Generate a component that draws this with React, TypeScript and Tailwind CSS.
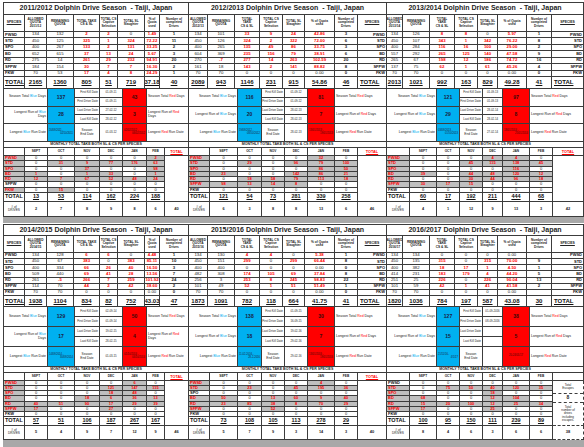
import React from 'react';

type Side = 'L' | 'B' | 'C';
type P = {
  title: string;
  side: Side;
  q: string;
  rows: string[][];
  total: string[];
  blue: string[];
  red: string[];
  dates: string[];
  monthly: number[][];
  mtotal: string[];
  drives: string[];
  dtotal: string;
  escapes?: boolean;
};

const SPECIES = ['PWSD', 'STD', 'SPO', 'BD', 'RD', 'SFPW', 'FKW'];

const TPL = {
  L: {
    w: 'w-[189px] pl-[3px]',
    top: 'grid grid-cols-[21px_22px_27px_26px_18px_27px_15px_29px]',
    mid: 'grid grid-cols-[44px_27px_25px_23px_24px_42px]',
    mon: 'grid grid-cols-[21px_23px_27px_25px_23px_24px_18px_24px]',
  },
  B: {
    w: 'w-[198px]',
    top: 'grid grid-cols-[19px_27px_25px_23px_22px_30px_23px_29px]',
    mid: 'grid grid-cols-[49px_24px_23px_23px_27px_52px]',
    mon: 'grid grid-cols-[21px_28px_24px_23px_23px_27px_23px_29px]',
  },
  C: {
    w: 'w-[197px]',
    top: 'grid grid-cols-[16px_27px_25px_23px_20px_29px_25px_32px]',
    mid: 'grid grid-cols-[50px_23px_23px_20px_27px_54px]',
    mon: 'grid grid-cols-[23px_27px_23px_23px_20px_27px_23px_31px]',
  },
};

const HT = {
  1: {
    pad: 'h-[2px]',
    title: 'h-[13px]',
    top: 'grid-rows-[17px_repeat(7,minmax(0,1fr))_12px] h-[74px]',
    mid: 'grid-rows-[repeat(6,minmax(0,1fr))] h-[53px]',
    mon: 'grid-rows-[8px_repeat(7,minmax(0,1fr))_9px_15px] h-[69px]',
    gray: 'h-[6px]',
  },
  2: {
    pad: 'h-[1px]',
    title: 'h-[12px]',
    top: 'grid-rows-[17px_repeat(7,minmax(0,1fr))_11px] h-[71px]',
    mid: 'grid-rows-[repeat(6,minmax(0,1fr))] h-[60px]',
    mon: 'grid-rows-[8px_repeat(7,minmax(0,1fr))_9px_14px] h-[67px]',
    gray: 'h-[7px]',
  },
};

const panels: P[] = [
  {
    title: '2011/2012 Dolphin Drive Season  - Taiji, Japan',
    side: 'L',
    q: '2011/12',
    rows: [
      ['134', '132', '2', '2', '0', '1.49', '1'],
      ['450', '125', '325', '1', '324', '72.22', '11'],
      ['400', '267', '133', '2', '131', '33.25', '2'],
      ['652', '615', '37', '13', '24', '5.67', '3'],
      ['275', '14', '261', '29', '232', '94.91', '20'],
      ['184', '154', '30', '7', '7', '16.30', '2'],
      ['70', '53', '17', '4', '8', '24.29', '1'],
    ],
    total: ['2165', '1360', '805', '51', '719', '37.18', '40'],
    blue: ['137', '28', '20/09/2011 -', '02/10/2011'],
    red: ['43', '3', '02/02/2012 -', '06/02/2012'],
    dates: ['01-09-11', '01-09-11', '27-02-12', '28-02-12', '01-03-12'],
    monthly: [
      [0, 0, 0, 0, 0, 2],
      [0, 31, 9, 77, 176, 63],
      [0, 0, 37, 0, 0, 98],
      [1, 0, 1, 33, 0, 1],
      [12, 7, 67, 52, 48, 24],
      [0, 0, 0, 0, 0, 0],
      [0, 15, 0, 0, 0, 0],
    ],
    mtotal: ['13', '53', '114', '162', '224', '188'],
    drives: ['2', '7', '8', '9', '8', '6'],
    dtotal: '40',
  },
  {
    title: '2012/2013 Dolphin Drive Season  - Taiji, Japan',
    side: 'B',
    q: '2012/13',
    rows: [
      ['134', '101', '33', '9', '24', '42.86', '3'],
      ['450', '126', '324', '2', '322', '72.00', '6'],
      ['400', '265', '135', '49', '86', '33.75', '3'],
      ['604', '369', '235', '156', '79', '38.91', '6'],
      ['270', '-7', '277', '14', '263', '102.59', '20'],
      ['161', '18', '143', '2', '141', '88.82', '8'],
      ['70', '70', '0', '0', '0', '0.00', '0'],
    ],
    total: ['2089', '943', '1146', '231', '915', '54.86', '46'],
    blue: ['116', '20', '19/09/2012 -', '08/10/2012'],
    red: ['81', '7', '13/01/2013 -', '19/01/2013'],
    dates: ['01-09-12', '01-09-12', '28-02-13', '28-02-13', '28-02-13'],
    monthly: [
      [0, 0, 0, 0, 32, 0],
      [0, 29, 0, 96, 79, 100],
      [0, 0, 0, 0, 86, 50],
      [23, 0, 0, 142, 86, 21],
      [0, 18, 58, 79, 113, 18],
      [98, 13, 14, 8, 0, 0],
      [0, 0, 0, 0, 0, 0],
    ],
    mtotal: ['121', '54', '73', '281', '339', '258'],
    drives: ['6', '3', '8', '8', '13', '6'],
    dtotal: '46',
  },
  {
    title: '2013/2014 Dolphin Drive Season  - Taiji, Japan',
    side: 'C',
    q: '2013/14',
    rows: [
      ['134', '126', '8', '8', '0', '5.97', '1'],
      ['450', '107', '343', '1', '342', '76.22', '8'],
      ['400', '284', '116', '16', '100', '29.00', '2'],
      ['557', '292', '265', '125', '140', '47.58', '9'],
      ['265', '67', '198', '12', '186', '74.72', '16'],
      ['137', '75', '62', '1', '61', '45.26', '4'],
      ['70', '70', '0', '0', '0', '0.00', '0'],
    ],
    total: ['2013', '1021', '992', '163', '829', '49.28', '41'],
    blue: ['121', '29', '03/09/2013 -', '01/10/2013'],
    red: ['97', '8', '18/01/2014 -', '25/01/2014'],
    dates: ['01-09-13', '01-09-13', '28-02-14', '28-02-14', '27-02-14'],
    monthly: [
      [0, 0, 0, 4, 4, 0],
      [0, 0, 45, 115, 138, 45],
      [0, 0, 0, 0, 116, 0],
      [39, 0, 44, 48, 120, 12],
      [0, 0, 30, 44, 96, 18],
      [30, 17, 15, 0, 0, 0],
      [0, 0, 0, 0, 0, 0],
    ],
    mtotal: ['60', '17', '192', '211', '444', '68'],
    drives: ['4', '1', '12', '9', '13', '3'],
    dtotal: '42',
  },
  {
    title: '2014/2015 Dolphin Drive Season  - Taiji, Japan',
    side: 'L',
    q: '2014/15',
    rows: [
      ['134', '128', '6', '6', '0', '4.48', '1'],
      ['450', '67', '383', '0', '383', '85.11', '10'],
      ['400', '334', '66', '26', '40', '16.50', '3'],
      ['509', '440', '69', '41', '28', '13.56', '7'],
      ['261', '-5', '266', '7', '259', '101.92', '24'],
      ['114', '70', '44', '2', '42', '38.60', '2'],
      ['70', '70', '0', '0', '0', '0.00', '0'],
    ],
    total: ['1938', '1104', '834', '82', '752', '43.03', '47'],
    blue: ['129', '17', '14/09/2014 -', '30/09/2014'],
    red: ['50', '4', '01/10/2014 -', '04/10/2014'],
    dates: ['02-09-14', '01-09-14', '19-02-15', '28-02-15', '01-03-15'],
    monthly: [
      [0, 0, 0, 0, 6, 0],
      [0, 0, 0, 121, 147, 115],
      [0, 0, 0, 18, 48, 0],
      [0, 0, 18, 6, 36, 13],
      [40, 51, 90, 17, 29, 39],
      [17, 0, 0, 27, 0, 0],
      [0, 0, 0, 0, 0, 0],
    ],
    mtotal: ['57', '51', '106', '187', '267', '167'],
    drives: ['5', '4', '9', '7', '12', '9'],
    dtotal: '46',
  },
  {
    title: '2015/2016 Dolphin Drive Season  - Taiji, Japan',
    side: 'B',
    q: '2015/16',
    rows: [
      ['134', '130', '4', '4', '0', '5.38', '1'],
      ['450', '151', '299', '0', '299', '66.44', '8'],
      ['400', '400', '0', '0', '0', '0.00', '0'],
      ['482', '308', '174', '105', '69', '37.84', '8'],
      ['256', '3', '253', '8', '245', '98.83', '22'],
      ['101', '49', '52', '1', '51', '51.49', '1'],
      ['70', '70', '0', '0', '0', '0.00', '0'],
    ],
    total: ['1873', '1091', '782', '118', '664', '41.75', '41'],
    blue: ['138', '18', '11-02-2016 -', '28-2-2016'],
    red: ['30', '7', '13/01/2016 -', '19/01/2016'],
    dates: ['01-09-15', '16-09-15', '19-02-16', '29-02-16', '29-02-16'],
    monthly: [
      [0, 0, 0, 0, 4, 0],
      [0, 23, 0, 45, 195, 36],
      [0, 0, 0, 0, 0, 0],
      [50, 0, 13, 60, 9, 40],
      [23, 85, 38, 8, 70, 29],
      [0, 0, 52, 0, 0, 0],
      [0, 0, 0, 0, 0, 0],
    ],
    mtotal: ['73', '108', '105', '113', '278', '29'],
    drives: ['5', '7', '9', '3', '14', '3'],
    dtotal: '40',
  },
  {
    title: '2016/2017 Dolphin Drive Season  - Taiji, Japan',
    side: 'C',
    q: '2016/17',
    rows: [
      ['134', '134', '0', '0', '0', '0.00', ''],
      ['450', '135', '315', '0', '315', '70.00', '9'],
      ['400', '382', '18', '17', '1', '4.50', '1'],
      ['414', '231', '183', '179', '4', '44.20', '5'],
      ['251', '25', '226', '0', '226', '90.04', '13'],
      ['101', '59', '42', '1', '41', '41.58', '2'],
      ['70', '70', '0', '0', '0', '0.00', ''],
    ],
    total: ['1820', '1036', '784', '197', '587', '43.08', '30'],
    blue: ['127', '15', '21/11/16-', '4/1/17'],
    red: ['38', '5', '20-24/01/17', ''],
    dates: ['01-09-2016', '08-09-2016', '', '', ''],
    monthly: [
      [0, 0, 0, 0, 0, 0],
      [0, 75, 50, 40, 120, 35],
      [0, 0, 0, 18, 0, 0],
      [68, 0, 0, 12, 104, 0],
      [15, 20, 100, 12, 25, 34],
      [17, 0, 0, 25, 0, 0],
      [0, 0, 0, 0, 0, 0],
    ],
    mtotal: ['100', '95', '150', '111', '239', '89'],
    drives: ['8', '4', '6', '3', '6', '6'],
    dtotal: '38',
    escapes: true,
  },
];

const BASE = 'flex items-center overflow-hidden border-r border-b border-[#3c3c3c] leading-[1.05] ';

function Cell({ children, cls = '' }: { children?: React.ReactNode; cls?: string }) {
  return <div className={BASE + 'justify-center text-center ' + cls}>{children}</div>;
}

const isZero = (v: string) => v === '0' || v === '0.00' || v === '';

function Blue() {
  return <span className="text-[#00b0f0]">Blue</span>;
}
function Red() {
  return <span className="text-[#ff0000]">Red</span>;
}

function TopTable({ p, r }: { p: P; r: 1 | 2 }) {
  const t = TPL[p.side];
  const h = HT[r];
  const L = p.side === 'L';
  const hd = 'text-[3.2px] font-bold text-[#222]';
  const heads = [
    <Cell key="h1" cls={hd}>
      ALLOWED
      <br />
      QUOTA
      <br />
      {p.q}
    </Cell>,
    <Cell key="h2" cls={hd}>
      REMAINING
      <br />
      QUOTA
    </Cell>,
    <Cell key="h3" cls={hd}>
      {L ? (
        <>
          TOTAL TAKE
          <br />
          CS &amp; SL
        </>
      ) : (
        <>
          TOTAL
          <br />
          TAKE
          <br />
          CS &amp; SL
        </>
      )}
    </Cell>,
    <Cell key="h4" cls={hd}>
      TOTAL CS
      <br />
      Captive
      <br />
      Selection
    </Cell>,
    <Cell key="h5" cls={hd}>
      TOTAL SL
      <br />
      Slaughter
    </Cell>,
    <Cell key="h6" cls={hd}>
      {L ? (
        <>
          % of
          <br />
          Quota
          <br />
          used
        </>
      ) : (
        <>
          % of Quota
          <br />
          used
        </>
      )}
    </Cell>,
    <Cell key="h7" cls={hd}>
      Number of
      <br />
      completed
      <br />
      Drives
    </Cell>,
  ];
  const sp = (
    <Cell key="sp" cls="text-[3.4px] font-bold underline text-[#222]">
      SPECIES
    </Cell>
  );
  const items: React.ReactNode[] = [];
  if (L) items.push(sp, ...heads);
  else items.push(...heads, sp);

  p.rows.forEach((row, i) => {
    const spc = (
      <div
        key={'s' + i}
        className={BASE + (L ? 'justify-start pl-[1px] ' : 'justify-end pr-[1px] ') + 'text-[4px] font-bold text-[#111]'}
      >
        {SPECIES[i]}
      </div>
    );
    const vals = row.map((v, j) => {
      let c = 'text-[4.3px] text-[#222]';
      if (j >= 2 && j <= 5 && !isZero(v)) c = 'text-[4.3px] font-bold text-[#ff0000]';
      if (j === 1 && v.startsWith('-')) c = 'text-[4.3px] font-bold text-[#ff0000]';
      if (j === 6) c = 'text-[4.3px] font-bold text-[#222]';
      return (
        <Cell key={'v' + i + '-' + j} cls={c}>
          {v}
        </Cell>
      );
    });
    if (L) items.push(spc, ...vals);
    else items.push(...vals, spc);
  });

  const tl = (
    <div
      key="tl"
      className={BASE + (L ? 'justify-start pl-[1px] ' : 'justify-start pl-[2px] ') + 'text-[6px] font-bold underline text-[#111]'}
    >
      TOTAL
    </div>
  );
  const tv = p.total.map((v, j) => (
    <Cell key={'t' + j} cls="text-[6px] font-bold underline text-[#111]">
      {v}
    </Cell>
  ));
  if (L) items.push(tl, ...tv);
  else items.push(...tv, tl);

  return <div className={`${t.top} ${h.top} ${L ? 'border-l border-[#3c3c3c]' : ''}`}>{items}</div>;
}

function MidTable({ p, r }: { p: P; r: 1 | 2 }) {
  const t = TPL[p.side];
  const h = HT[r];
  const L = p.side === 'L';
  const lt = 'row-span-2 justify-end text-right pr-[1px] pl-[2px] text-[3.5px] text-[#222] ';
  const rt = 'row-span-2 justify-start text-left pl-[1px] pr-[2px] text-[3.5px] text-[#222] ';
  const blue = 'row-span-2 justify-center bg-[#00b0f0] text-[5px] font-bold text-[#1b2040] ';
  const red = 'row-span-2 justify-center bg-[#ff0000] text-[5px] font-bold text-[#3a0a0a] ';
  const lab = 'justify-end text-right pr-[1px] text-[3px] text-[#222] ';
  const dt = 'justify-center text-[2.8px] text-[#222] ';
  const d = p.dates;
  return (
    <div className={`${t.mid} ${h.mid} ${L ? 'border-l border-[#3c3c3c]' : ''}`}>
      <div className={BASE + lt}>
        <span>
          Season Total <Blue /> Days
        </span>
      </div>
      <div className={BASE + blue}>{p.blue[0]}</div>
      <div className={BASE + lab}>First Kill Date</div>
      <div className={BASE + dt}>{d[0]}</div>
      <div className={BASE + red}>{p.red[0]}</div>
      <div className={BASE + rt}>
        <span>
          Season Total <Red /> Days
        </span>
      </div>
      <div className={BASE + lab}>First Drive Date</div>
      <div className={BASE + dt}>{d[1]}</div>

      <div className={BASE + lt}>
        <span>
          Longest Run of <Blue /> Days
        </span>
      </div>
      <div className={BASE + blue}>{p.blue[1]}</div>
      <div className={BASE + lab}>Last Drive Date</div>
      <div className={BASE + dt}>{d[2]}</div>
      <div className={BASE + red}>{p.red[1]}</div>
      <div className={BASE + rt}>
        <span>
          Longest Run of <Red /> Days
        </span>
      </div>
      <div className={BASE + lab}>Last Kill Date</div>
      <div className={BASE + dt}>{d[3]}</div>

      <div className={BASE + lt}>
        <span>
          Longest <Blue /> Run Date
        </span>
      </div>
      <div className={BASE + 'row-span-2 flex-col justify-center bg-[#00b0f0] text-[2.6px] text-[#1b2040]'}>
        <span className="self-start pl-[1px]">{p.blue[2]}</span>
        <span className="self-end pr-[1px]">{p.blue[3]}</span>
      </div>
      <div className={BASE + 'row-span-2 justify-center text-center text-[3.2px] text-[#222]'}>
        <span>
          Season
          <br />
          End Date
        </span>
      </div>
      <div className={BASE + 'row-span-2 ' + dt}>{d[4]}</div>
      <div className={BASE + 'row-span-2 flex-col justify-center bg-[#ff0000] text-[2.6px] text-[#3a0a0a]'}>
        <span className={p.red[3] ? 'self-start pl-[1px]' : 'self-center'}>{p.red[2]}</span>
        {p.red[3] ? <span className="self-end pr-[1px]">{p.red[3]}</span> : null}
      </div>
      <div className={BASE + rt}>
        <span>
          Longest <Red /> Run Date
        </span>
      </div>
    </div>
  );
}

function MonTable({ p, r }: { p: P; r: 1 | 2 }) {
  const t = TPL[p.side];
  const h = HT[r];
  const L = p.side === 'L';
  const items: React.ReactNode[] = [];
  items.push(<Cell key="b0" />);
  ['SEPT', 'OCT', 'NOV', 'DEC', 'JAN', 'FEB'].forEach((m) =>
    items.push(
      <Cell key={m} cls="text-[3.2px] font-bold text-[#222]">
        {m}
      </Cell>,
    ),
  );
  items.push(
    <Cell key="mt" cls="text-[3.8px] font-bold underline text-[#ff0000]">
      {p.escapes ? '' : 'TOTAL'}
    </Cell>,
  );
  p.monthly.forEach((row, i) => {
    const any = row.some((v) => v !== 0);
    items.push(
      <div
        key={'ms' + i}
        className={
          BASE +
          'justify-start pl-[1px] text-[4px] font-bold ' +
          (any ? 'bg-[#bfbfbf] text-[#ff0000]' : 'bg-white text-[#111]')
        }
      >
        {SPECIES[i]}
      </div>,
    );
    row.forEach((v, j) =>
      items.push(
        <Cell
          key={'mv' + i + '-' + j}
          cls={'text-[4px] ' + (v !== 0 ? 'bg-[#bfbfbf] font-bold text-[#ff0000]' : 'bg-white text-[#222]')}
        >
          {v}
        </Cell>,
      ),
    );
    if (i === 0) {
      if (p.escapes) {
        items.push(
          <div
            key="esc"
            className="row-span-8 flex flex-col border-r border-dashed border-b border-r-[#3c3c3c] border-b-[#3c3c3c] text-[#222]"
          >
            <div className="flex flex-[1.1] items-center justify-center text-center text-[3px] leading-[1.1]">
              Total
              <br />
              Escapes
            </div>
            <div className="flex h-[10px] items-center justify-center border-y border-dashed border-[#3c3c3c] text-[5px] font-bold">
              8
            </div>
            <div className="flex flex-[2] items-center justify-center text-center text-[3px] leading-[1.1]">
              Total
              <br />
              number of
              <br />
              drives
              <br />
              including
              <br />
              escapes.
            </div>
          </div>,
        );
      } else {
        items.push(
          <div key="tc" className="row-span-8 border-r border-b border-[#3c3c3c] bg-white" />,
        );
      }
    }
  });
  items.push(
    <div key="tt" className={BASE + 'justify-start pl-[1px] text-[5.5px] font-bold text-[#111]'}>
      TOTAL
    </div>,
  );
  p.mtotal.forEach((v, j) =>
    items.push(
      <Cell key={'mt' + j} cls="text-[5.5px] font-bold underline text-[#111]">
        {v}
      </Cell>,
    ),
  );
  items.push(
    <Cell key="dl" cls="text-[3.2px] text-[#222]">
      # of
      <br />
      DRIVES
    </Cell>,
  );
  p.drives.forEach((v, j) =>
    items.push(
      <Cell key={'d' + j} cls="text-[3.8px] font-bold text-[#222]">
        {v}
      </Cell>,
    ),
  );
  items.push(
    <div
      key="dt"
      className={
        BASE +
        'justify-center text-[4px] font-bold text-[#222] ' +
        (p.escapes ? 'border-dashed' : '')
      }
    >
      {p.dtotal}
    </div>,
  );
  return <div className={`${t.mon} ${h.mon} ${L ? 'border-l border-[#3c3c3c]' : ''}`}>{items}</div>;
}

function Panel({ p, r }: { p: P; r: 1 | 2 }) {
  const t = TPL[p.side];
  const h = HT[r];
  const L = p.side === 'L';
  return (
    <div className={`${t.w} flex shrink-0 flex-col overflow-hidden bg-white`}>
      <div className={h.pad} />
      <div
        className={`${h.title} flex items-center justify-center whitespace-pre border-t border-r border-b border-[#3c3c3c] text-[7px] font-bold text-[#1e1e1e] ${L ? 'border-l' : ''}`}
      >
        {p.title}
      </div>
      <TopTable p={p} r={r} />
      <MidTable p={p} r={r} />
      <div
        className={`flex h-[6px] items-center justify-center border-r border-b border-[#3c3c3c] text-[3.6px] font-bold leading-none text-[#222] ${L ? 'border-l' : ''}`}
      >
        MONTHLY TOTAL TAKE BOTH SL &amp; CS PER SPECIES
      </div>
      <MonTable p={p} r={r} />
      <div className={`${h.gray} bg-[#a8a8a8]`} />
    </div>
  );
}

export default function App() {
  return (
    <div className="flex h-[447px] w-[584px] flex-col overflow-hidden bg-white font-['Liberation_Sans',Arial,sans-serif]">
      <div className="flex h-[223px]">
        <Panel p={panels[0]} r={1} />
        <Panel p={panels[1]} r={1} />
        <Panel p={panels[2]} r={1} />
      </div>
      <div className="flex h-[224px]">
        <Panel p={panels[3]} r={2} />
        <Panel p={panels[4]} r={2} />
        <Panel p={panels[5]} r={2} />
      </div>
    </div>
  );
}
